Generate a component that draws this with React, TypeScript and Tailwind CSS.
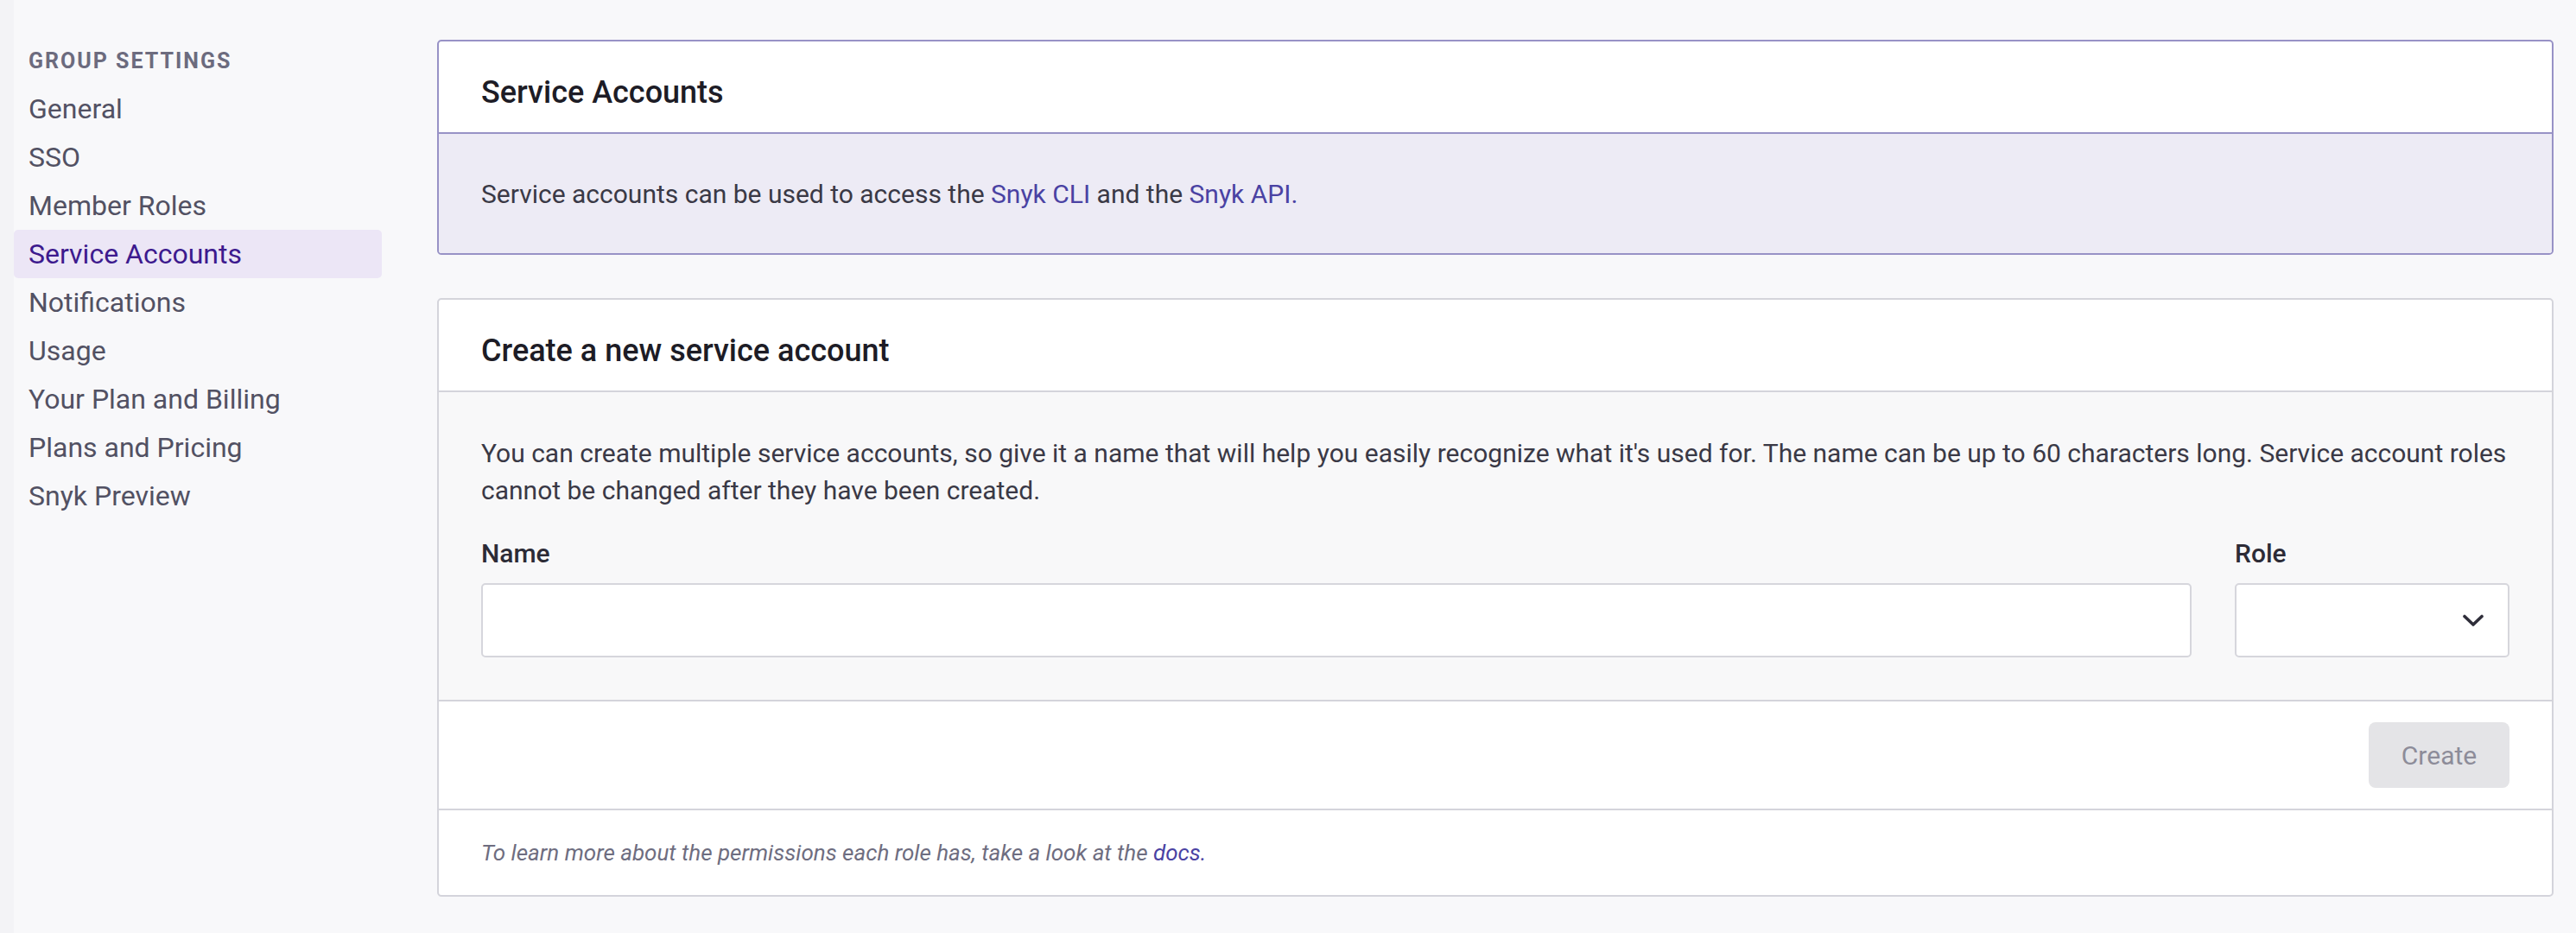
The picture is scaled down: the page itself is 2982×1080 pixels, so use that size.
import { ChangeEvent, useState } from "react";

const navItems = [
  "General",
  "SSO",
  "Member Roles",
  "Service Accounts",
  "Notifications",
  "Usage",
  "Your Plan and Billing",
  "Plans and Pricing",
  "Snyk Preview",
];

function App() {
  const [active, setActive] = useState("Service Accounts");
  const [name, setName] = useState("");

  return (
    <div className="flex min-h-[1080px] w-full bg-[#f8f8fa] font-['Roboto',sans-serif] text-[#3a3946]">
      {/* Sidebar */}
      <div className="w-[442px] shrink-0 border-l-[16px] border-[#f3f3f6] pt-[56px]">
        <h2 className="mb-[12px] pl-[17px] text-[25px] leading-[30px] font-bold uppercase tracking-[2px] text-[#6c6b7e]">
          Group Settings
        </h2>
        <ul>
          {navItems.map((item) => (
            <li
              key={item}
              onClick={() => setActive(item)}
              className={`flex h-[56px] cursor-pointer items-center rounded-[5px] pl-[17px] text-[32px] ${
                active === item ? "bg-[#ece6f6] text-[#3d1a8e]" : "text-[#525163] hover:text-[#1d1c26]"
              }`}
            >
              {item}
            </li>
          ))}
        </ul>
      </div>

      {/* Main Content */}
      <div className="flex flex-1 flex-col gap-[50px] pl-[64px] pr-[26px] pt-[46px]">
        <div className="overflow-hidden rounded-[5px] border-2 border-[#9892c6] bg-white">
          <div className="h-[107px] border-b-2 border-[#9892c6] px-[49px] pt-[39px]">
            <h1 className="text-[36px] leading-[40px] font-medium text-[#1d1c26]">Service Accounts</h1>
          </div>
          <div className="bg-[#edebf5] px-[49px] pt-[48px] pb-[47px] text-[30px] leading-[43px]">
            Service accounts can be used to access the{" "}
            <a className="text-[#4a42a3]" href="#">
              Snyk CLI
            </a>{" "}
            and the{" "}
            <a className="text-[#4a42a3]" href="#">
              Snyk API.
            </a>
          </div>
        </div>

        <div className="overflow-hidden rounded-[5px] border-2 border-[#d4d4db] bg-white">
          <div className="h-[107px] border-b-2 border-[#d4d4db] px-[49px] pt-[39px]">
            <h1 className="text-[36px] leading-[40px] font-medium text-[#1d1c26]">Create a new service account</h1>
          </div>

          <div className="border-b-2 border-[#d4d4db] bg-[#f8f8f9] px-[49px] pt-[49px] pb-[49px]">
            <p className="mb-[30px] text-[30px] leading-[43px]">
              You can create multiple service accounts, so give it a name that will help you easily recognize what it's
              used for. The name can be up to 60 characters long. Service account roles cannot be changed after they have
              been created.
            </p>
            <div className="flex gap-[50px]">
              <div className="flex flex-1 flex-col">
                <label className="mb-[13px] text-[30px] leading-[43px] font-medium text-[#2c2b36]">Name</label>
                <input
                  value={name}
                  onChange={(e: ChangeEvent<HTMLInputElement>) => setName(e.target.value)}
                  className="h-[86px] rounded-[5px] border-2 border-[#d6d6dc] bg-white px-[20px] text-[30px] outline-none"
                />
              </div>
              <div className="flex w-[318px] flex-col">
                <label className="mb-[13px] text-[30px] leading-[43px] font-medium text-[#2c2b36]">Role</label>
                <div className="relative flex h-[86px] items-center justify-end rounded-[5px] border-2 border-[#d6d6dc] bg-white pr-[28px]">
                  <svg width="24" height="15" viewBox="0 0 24 15" fill="none">
                    <path d="M2 2.5 L12 12 L22 2.5" stroke="#2f2e3a" strokeWidth="3.6" strokeLinecap="round" strokeLinejoin="round" />
                  </svg>
                </div>
              </div>
            </div>
          </div>

          <div className="flex justify-end border-b-2 border-[#d4d4db] px-[49px] py-[24px]">
            <button
              disabled={!name}
              className="h-[76px] w-[163px] rounded-[8px] bg-[#e4e4e7] text-[30px] text-[#8d8c99]"
            >
              Create
            </button>
          </div>

          <div className="flex h-[98px] items-center px-[49px] text-[26px] italic text-[#6e6d80]">
            <span>
              To learn more about the permissions each role has, take a look at the{" "}
              <a className="text-[#4a42a3]" href="#">
                docs.
              </a>
            </span>
          </div>
        </div>
      </div>
    </div>
  );
}

export default App;
